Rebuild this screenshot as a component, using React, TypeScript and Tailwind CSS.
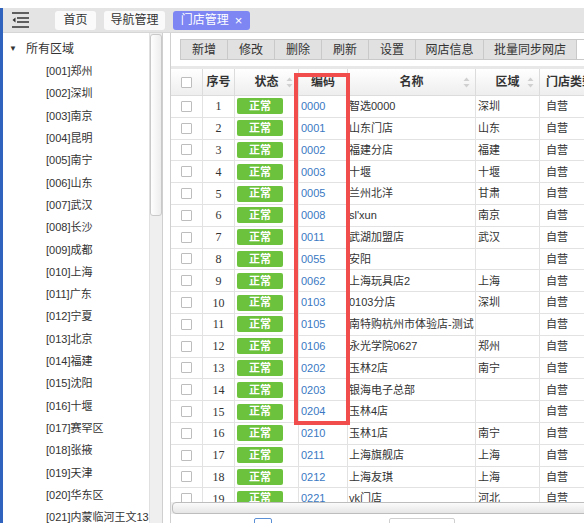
import React from 'react';

const areas = [
  '[001]郑州', '[002]深圳', '[003]南京', '[004]昆明', '[005]南宁', '[006]山东', '[007]武汉',
  '[008]长沙', '[009]成都', '[010]上海', '[011]广东', '[012]宁夏', '[013]北京', '[014]福建',
  '[015]沈阳', '[016]十堰', '[017]赛罕区', '[018]张掖', '[019]天津', '[020]华东区', '[021]内蒙临河王文13',
];

const stores = [
  ['0000', '智选0000', '深圳'],
  ['0001', '山东门店', '山东'],
  ['0002', '福建分店', '福建'],
  ['0003', '十堰', '十堰'],
  ['0005', '兰州北洋', '甘肃'],
  ['0008', "sl'xun", '南京'],
  ['0011', '武湖加盟店', '武汉'],
  ['0055', '安阳', ''],
  ['0062', '上海玩具店2', '上海'],
  ['0103', '0103分店', '深圳'],
  ['0105', '南特购杭州市体验店-测试', ''],
  ['0106', '永光学院0627', '郑州'],
  ['0202', '玉林2店', '南宁'],
  ['0203', '银海电子总部', ''],
  ['0204', '玉林4店', ''],
  ['0210', '玉林1店', '南宁'],
  ['0211', '上海旗舰店', '上海'],
  ['0212', '上海友琪', '上海'],
  ['0221', 'vk门店', '河北'],
];

const tools = [
  { label: '新增', w: 'w-[46px]' },
  { label: '修改', w: 'w-[47px]' },
  { label: '删除', w: 'w-[47px]' },
  { label: '刷新', w: 'w-[47px]' },
  { label: '设置', w: 'w-[47px]' },
  { label: '网店信息', w: 'w-[68px]' },
  { label: '批量同步网店', w: 'w-[93px]' },
];

const SortIcon = () => (
  <svg width="7" height="11" viewBox="0 0 7 11" className="absolute right-[5px] top-[8px]">
    <path d="M3.5 0.5 L6.5 4 L0.5 4 Z" fill="#d0d0d0" />
    <path d="M3.5 10.5 L6.5 7 L0.5 7 Z" fill="#d0d0d0" />
  </svg>
);

const Checkbox = () => (
  <div className="w-[11px] h-[11px] border border-[#bdbdbd] bg-white rounded-[1px]" />
);

const App: React.FC = () => {
  return (
    <div className="w-[584px] h-[523px] overflow-hidden relative bg-white pt-2 text-[#333] font-['Liberation_Sans','Noto_Sans_CJK_SC',sans-serif]">
      <div className="flex h-full">
        {/* blue edge */}
        <div className="w-[3px] bg-[#2f63be] shrink-0" />

        <div className="flex-1 flex flex-col min-w-0">
          {/* top bar */}
          <div className="h-[25px] bg-[#e4e4e4] flex items-center shrink-0 border-b border-[#d6d6d6]">
            <svg width="17" height="16" viewBox="0 0 17 16" className="ml-[9px]">
              <path d="M0 1 H17 M5 6 H17 M5 10 H17 M0 15 H17" stroke="#333" strokeWidth="1.4" />
              <path d="M0.5 8 L3.5 5.5 L3.5 10.5 Z" fill="#333" />
            </svg>
            <div className="ml-[26px] flex items-center gap-2 text-[12px]">
              <div className="h-[19px] w-[41px] bg-[#fafafa] rounded-[3px] flex items-center justify-center">首页</div>
              <div className="h-[19px] w-[61px] bg-[#fafafa] rounded-[3px] flex items-center justify-center">导航管理</div>
              <div className="h-[19px] w-[77px] bg-[#7d86f3] rounded-[3px] flex items-center justify-center gap-[6px] text-white">
                <span>门店管理</span>
                <span className="text-[13px] leading-none">×</span>
              </div>
            </div>
          </div>

          <div className="flex flex-1 min-h-0">
            {/* left tree */}
            <div className="w-[160px] flex shrink-0 border-r border-[#cfcfcf]">
              <div className="w-[147px] pt-[5px] text-[11px] whitespace-nowrap overflow-hidden">
                <div className="h-[22.3px] flex items-center text-[12px]">
                  <span className="ml-[6px] text-[8px] text-[#333]">▼</span>
                  <span className="ml-[9px]">所有区域</span>
                </div>
                {areas.map((a) => (
                  <div key={a} className="h-[22.3px] flex items-center pl-[43px]">{a}</div>
                ))}
              </div>
              <div className="w-[13px] bg-[#efefef] border-l border-[#e0e0e0] pt-[1px]">
                <div className="h-[182px] w-[12px] rounded-[3px] border border-[#c9c9c9] bg-gradient-to-r from-[#fefefe] to-[#ededed]" />
              </div>
            </div>

            {/* right content */}
            <div className="ml-[7px] flex-1 flex flex-col border-l border-[#d0d0d0] min-w-0">
              <div className="h-[33px] shrink-0 pt-[6px] pl-[9px] flex">
                <div className="flex h-[21px] border border-[#c9c9c9] bg-[#e1e1e1] text-[12px]">
                  {tools.map((t, i) => (
                    <div
                      key={t.label}
                      className={(i > 0 ? 'border-l border-[#c9c9c9] ' : '') + t.w + ' shrink-0 flex items-center justify-center'}
                    >
                      {t.label}
                    </div>
                  ))}
                  <div className="w-[10px] shrink-0 border-l border-[#c9c9c9] bg-white" />
                </div>
              </div>
              <div className="h-[3px] bg-[#e8e8e8] shrink-0" />

              {/* table */}
              <div className="h-[433px] overflow-hidden shrink-0 text-[11px]">
                <div className="w-[520px]">
                  <div className="h-[27px] flex border-b border-[#dcdcdc] bg-gradient-to-b from-white to-[#eeeeee] font-bold text-[12px]">
                    <div className="w-[32px] shrink-0 border-r border-[#dcdcdc] flex items-center justify-center"><Checkbox /></div>
                    <div className="w-[32px] shrink-0 border-r border-[#dcdcdc] flex items-center justify-center">序号</div>
                    <div className="w-[64px] shrink-0 border-r border-[#dcdcdc] flex items-center justify-center relative">状态<SortIcon /></div>
                    <div className="w-[49px] shrink-0 border-r border-[#dcdcdc] flex items-center justify-center">编码</div>
                    <div className="w-[128px] shrink-0 border-r border-[#dcdcdc] flex items-center justify-center relative">名称<SortIcon /></div>
                    <div className="w-[64px] shrink-0 border-r border-[#dcdcdc] flex items-center justify-center relative">区域<SortIcon /></div>
                    <div className="w-[80px] shrink-0 flex items-center pl-[6px] whitespace-nowrap">门店类型</div>
                  </div>
                  {stores.map((s, i) => (
                    <div key={s[0]} className="h-[21.8px] flex border-b border-[#e2e2e2] whitespace-nowrap">
                      <div className="w-[32px] shrink-0 border-r border-[#e2e2e2] flex items-center justify-center"><Checkbox /></div>
                      <div className="w-[32px] shrink-0 border-r border-[#e2e2e2] flex items-center justify-center text-[12px] font-['Liberation_Serif',serif]">{i + 1}</div>
                      <div className="w-[64px] shrink-0 border-r border-[#e2e2e2] flex items-center pl-[2px]">
                        <div className="w-[46px] h-[16px] rounded-[2px] bg-[#6cc23c] text-white text-[11px] font-bold flex items-center justify-center">正常</div>
                      </div>
                      <div className="w-[49px] shrink-0 border-r border-[#e2e2e2] flex items-center pl-[2px] text-[#3a78c3]">{s[0]}</div>
                      <div className="w-[128px] shrink-0 border-r border-[#e2e2e2] flex items-center pl-px overflow-hidden">{s[1]}</div>
                      <div className="w-[64px] shrink-0 border-r border-[#e2e2e2] flex items-center pl-[2px]">{s[2]}</div>
                      <div className="w-[80px] shrink-0 flex items-center pl-[6px]">自营</div>
                    </div>
                  ))}
                </div>
              </div>

              {/* horizontal scrollbar */}
              <div className="h-[12px] shrink-0 bg-[#f0f0f0] pl-px">
                <div className="h-[12px] w-[430px] rounded-[4px] border border-[#bdbdbd] bg-gradient-to-b from-[#fbfbfb] to-[#e6e6e6]" />
              </div>

              {/* pager */}
              <div className="flex-1 flex items-start pt-[4px]">
                <div className="ml-[83px] w-[18px] h-[10px] border border-[#5b8fd6] rounded-[2px]" />
                <div className="ml-[117px] w-[66px] h-[10px] border border-[#cfcfcf] rounded-[2px]" />
              </div>
            </div>
          </div>
        </div>
      </div>

      {/* highlight box */}
      <div className="absolute left-[294px] top-[73px] w-[56px] h-[352px] border-4 border-[#f24d4d]" />
    </div>
  );
};

export default App;
